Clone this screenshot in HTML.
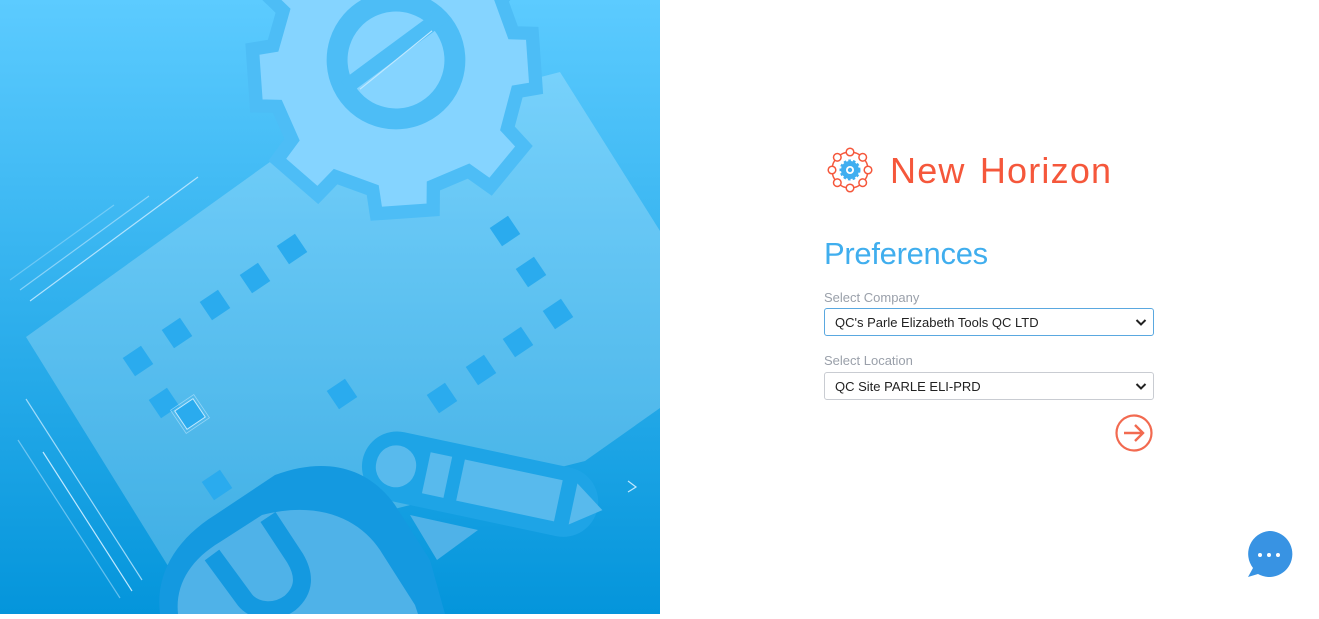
<!DOCTYPE html>
<html><head><meta charset="utf-8"><style>
html,body{margin:0;padding:0;width:1319px;height:614px;overflow:hidden;background:#fff;font-family:"Liberation Sans",sans-serif}
.left{position:absolute;left:0;top:0;width:660px;height:614px;background:linear-gradient(#5ccbff,#0495db)}
.brand{position:absolute;left:890px;top:150px;font-size:36px;color:#f5573b;letter-spacing:1.2px;word-spacing:3px}
.pref{position:absolute;left:824px;top:236px;font-size:31px;color:#40aeee;font-weight:normal;letter-spacing:-0.3px}
.lbl{position:absolute;left:824px;font-size:13px;color:#9aa0aa}
.sel{position:absolute;left:824px;width:328px;height:26px;border:1px solid #c9ccd2;border-radius:3px;font-size:13px;color:#222;box-sizing:content-box}
.sel span{position:absolute;left:10px;top:6px}
.sel svg{position:absolute;right:6px;top:9px}
</style></head><body>
<div class="left">
<svg width="660" height="614" viewBox="0 0 660 614">
<g fill="none" stroke="#bfe8ff" stroke-width="1.2">
<line x1="10" y1="280" x2="114" y2="205" opacity=".4"/>
<line x1="20" y1="290" x2="149" y2="196" opacity=".6"/>
<line x1="30" y1="301" x2="198" y2="177" opacity=".9"/>
<line x1="26" y1="399" x2="142" y2="580" opacity=".8"/>
<line x1="43" y1="452" x2="132" y2="591" opacity="1"/>
<line x1="18" y1="440" x2="120" y2="598" opacity=".5"/>
</g>
<polygon points="26,337 302,139 560,72 660,231 660,408 585,461 168,566" fill="#ffffff" fill-opacity=".22"/>
<g transform="translate(396,60) rotate(-4) scale(0.95)">
<g fill="#85d4ff" stroke="#4dbdf6" stroke-width="14">
<path d="M-30,-125 L30,-125 L34,-105 L75,-90 L95,-110 L135,-75 L115,-55 L125,-20 L145,-18 L145,40 L125,42 L112,80 L128,100 L90,140 L68,122 L30,135 L28,160 L-32,160 L-34,135 L-72,118 L-92,136 L-132,96 L-115,76 L-128,40 L-150,38 L-150,-22 L-128,-24 L-115,-60 L-133,-80 L-95,-118 L-75,-100 L-34,-108 Z"/>
</g>
<circle cx="0" cy="0" r="62" fill="#85d4ff" stroke="#4dbdf6" stroke-width="22"/>
<line x1="-55" y1="25" x2="55" y2="-45" stroke="#4dbdf6" stroke-width="16"/>
<line x1="-40" y1="28" x2="40" y2="-28" stroke="#bfe8ff" stroke-width="1.2"/>
</g>
<g fill="#2aabee">
<g transform="translate(292,249) rotate(-34)"><rect x="-11" y="-11" width="22" height="22"/></g>
<g transform="translate(255,278) rotate(-34)"><rect x="-11" y="-11" width="22" height="22"/></g>
<g transform="translate(215,305) rotate(-34)"><rect x="-11" y="-11" width="22" height="22"/></g>
<g transform="translate(177,333) rotate(-34)"><rect x="-11" y="-11" width="22" height="22"/></g>
<g transform="translate(138,361) rotate(-34)"><rect x="-11" y="-11" width="22" height="22"/></g>
<g transform="translate(164,403) rotate(-34)"><rect x="-11" y="-11" width="22" height="22"/></g>
<g transform="translate(217,485) rotate(-34)"><rect x="-11" y="-11" width="22" height="22"/></g>
<g transform="translate(342,394) rotate(-34)"><rect x="-11" y="-11" width="22" height="22"/></g>
<g transform="translate(442,398) rotate(-34)"><rect x="-11" y="-11" width="22" height="22"/></g>
<g transform="translate(481,370) rotate(-34)"><rect x="-11" y="-11" width="22" height="22"/></g>
<g transform="translate(518,342) rotate(-34)"><rect x="-11" y="-11" width="22" height="22"/></g>
<g transform="translate(558,314) rotate(-34)"><rect x="-11" y="-11" width="22" height="22"/></g>
<g transform="translate(531,272) rotate(-34)"><rect x="-11" y="-11" width="22" height="22"/></g>
<g transform="translate(505,231) rotate(-34)"><rect x="-11" y="-11" width="22" height="22"/></g>
<g transform="translate(190,414) rotate(-34)"><rect x="-11" y="-11" width="22" height="22" stroke="#bfe8ff" stroke-width="1"/><rect x="-14" y="-14" width="28" height="28" fill="none" stroke="#bfe8ff" stroke-width=".8" opacity=".6"/></g>
</g>
<g transform="translate(370,425) rotate(12)">
<rect x="0" y="0" width="240" height="70" rx="35" fill="#1ea4e6"/>
<rect x="14" y="14" width="40" height="42" rx="20" fill="#58baed"/>
<rect x="65" y="14" width="22" height="42" fill="#58baed"/>
<rect x="100" y="14" width="100" height="42" fill="#58baed"/>
<polygon points="215,14 245,35 215,56" fill="#58baed"/>
</g>
<path d="M160,614 C155,575 175,540 215,515 L275,475 C330,455 370,470 395,505 L430,560 L445,614 Z" fill="#1499e0"/>
<path d="M178,614 C175,585 190,560 220,542 L262,515 C320,500 360,520 380,550 L415,605 L418,614 Z" fill="#4fb2e8"/>
<path d="M212,555 L245,600 C255,612 275,614 290,603 C305,590 305,575 295,558 L268,517" fill="none" stroke="#1499e0" stroke-width="18"/>
<path d="M410,515 L478,530 L437,560 Z" fill="#4fb2e8"/>
<polyline points="628,481 636,487 628,492" fill="none" stroke="#bfe8ff" stroke-width="1.2"/>
</svg>
</div>

<svg style="position:absolute;left:826px;top:146px" width="48" height="48" viewBox="-24 -24 48 48">
<circle r="18" fill="none" stroke="#f5573b" stroke-width="1.5"/>
<g fill="#fff" stroke="#f5573b" stroke-width="1.5">
<circle cx="0" cy="-18" r="3.8"/><circle cx="12.7" cy="-12.7" r="3.8"/><circle cx="18" cy="0" r="3.8"/><circle cx="12.7" cy="12.7" r="3.8"/>
<circle cx="0" cy="18" r="3.8"/><circle cx="-12.7" cy="12.7" r="3.8"/><circle cx="-18" cy="0" r="3.8"/><circle cx="-12.7" cy="-12.7" r="3.8"/>
</g>
<circle r="9" fill="#40aef0" stroke="#40aef0" stroke-width="3" stroke-dasharray="2.5 2"/>
<circle r="4" fill="#fff"/><circle r="2.2" fill="#40aef0"/>
</svg>
<div class="brand">New Horizon</div>
<div class="pref">Preferences</div>
<div class="lbl" style="top:290px">Select Company</div>
<div class="sel" style="top:308px;border-color:#5aa8e0"><span>QC's Parle Elizabeth Tools QC LTD</span><svg width="12" height="9" viewBox="0 0 12 9"><polyline points="1.5,2 6,6.5 10.5,2" fill="none" stroke="#222" stroke-width="2"/></svg></div>
<div class="lbl" style="top:353px">Select Location</div>
<div class="sel" style="top:372px"><span>QC Site PARLE ELI-PRD</span><svg width="12" height="9" viewBox="0 0 12 9"><polyline points="1.5,2 6,6.5 10.5,2" fill="none" stroke="#222" stroke-width="2"/></svg></div>
<svg style="position:absolute;left:1114px;top:413px" width="40" height="40" viewBox="0 0 40 40">
<circle cx="20" cy="20" r="17.5" fill="none" stroke="#f26a50" stroke-width="2.2"/>
<path d="M10,20 H29 M21,12 L29,20 L21,28" fill="none" stroke="#f26a50" stroke-width="2.4"/>
</svg>
<svg style="position:absolute;left:1240px;top:526px" width="58" height="56" viewBox="0 0 58 56">
<circle cx="29" cy="28" r="25" fill="#fff"/>
<path d="M29,5 A23,23 0 1 1 18,48 L8,51 L13,42 A23,23 0 0 1 29,5Z" fill="#3893e3"/>
<circle cx="20" cy="29" r="2" fill="#fff"/><circle cx="29" cy="29" r="2" fill="#fff"/><circle cx="38" cy="29" r="2" fill="#fff"/>
</svg>
</body></html>
